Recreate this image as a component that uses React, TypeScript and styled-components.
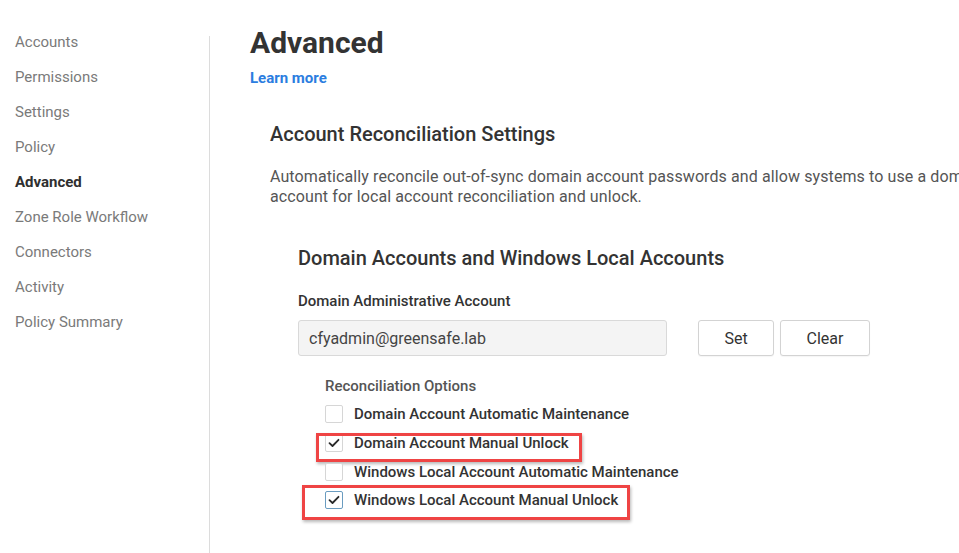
import React from "react";
import styled, { createGlobalStyle, css } from "styled-components";

const Global = createGlobalStyle`
  html, body { margin: 0; padding: 0; background: #fff; overflow: hidden; }
  body { font-family: Roboto, "Noto Sans", Arial, sans-serif; color: #333; }
  * { box-sizing: border-box; }
`;

const Page = styled.div`
  display: flex;
  width: 100vw;
  height: 553px;
  overflow: hidden;
`;

const Nav = styled.nav`
  width: 209px;
  flex-shrink: 0;
  padding: 25px 0 0 15px;
  display: flex;
  flex-direction: column;
`;

const NavItem = styled.div<{ $active?: boolean }>`
  height: 35px;
  line-height: 35px;
  font-size: 15px;
  color: ${(p) => (p.$active ? "#2f2f2f" : "#7a7a7a")};
  font-weight: ${(p) => (p.$active ? 700 : 400)};
  white-space: nowrap;
`;

const Divider = styled.div`
  width: 1px;
  flex-shrink: 0;
  margin-top: 36px;
  background: #dcdcdc;
`;

const Main = styled.main`
  flex: 1;
  min-width: 0;
  padding: 26px 0 0 40px;
`;

const Title = styled.h1`
  margin: 0;
  font-size: 30px;
  line-height: 34px;
  font-weight: 700;
  color: #333;
`;

const LearnMore = styled.a`
  display: block;
  margin-top: 8px;
  font-size: 15px;
  line-height: 20px;
  font-weight: 700;
  color: #2b7de0;
  text-decoration: none;
`;

const Section = styled.section`
  margin-top: 34px;
  padding-left: 20px;
`;

const SectionTitle = styled.h2`
  margin: 0;
  font-size: 20px;
  line-height: 24px;
  font-weight: 500;
  color: #333;
`;

const Description = styled.p`
  margin: 21px 0 0;
  width: 860px;
  font-size: 16px;
  letter-spacing: 0.1px;
  line-height: 20px;
  color: #555;
`;

const SubSection = styled.div`
  margin-top: 39px;
  padding-left: 28px;
`;

const SubTitle = styled.h3`
  margin: 0;
  font-size: 20px;
  line-height: 24px;
  font-weight: 500;
  color: #333;
`;

const FieldLabel = styled.div`
  margin-top: 22px;
  font-size: 15px;
  line-height: 18px;
  font-weight: 500;
  color: #333;
`;

const FieldRow = styled.div`
  display: flex;
  margin-top: 10px;
  height: 36px;
`;

const Input = styled.div`
  width: 369px;
  height: 36px;
  padding: 0 10px;
  display: flex;
  align-items: center;
  font-size: 16px;
  color: #444;
  background: #f4f4f4;
  border: 1px solid #d9d9d9;
  border-radius: 3px;
`;

const Button = styled.button<{ $w: number; $ml: number }>`
  width: ${(p) => p.$w}px;
  margin-left: ${(p) => p.$ml}px;
  height: 36px;
  font-family: inherit;
  font-size: 16px;
  color: #333;
  background: #fff;
  border: 1px solid #d3d3d3;
  border-radius: 3px;
  box-shadow: 0 1px 1px rgba(0, 0, 0, 0.04);
`;

const Options = styled.div`
  margin-top: 21px;
  padding-left: 27px;
`;

const OptionsLabel = styled.div`
  font-size: 15px;
  line-height: 18px;
  font-weight: 500;
  color: #555;
  margin-bottom: 5px;
`;

const Row = styled.div`
  position: relative;
  height: 28.7px;
  display: flex;
  align-items: center;
`;

const Box = styled.span<{ $focus?: boolean }>`
  width: 18px;
  height: 18px;
  flex-shrink: 0;
  border: 1px solid ${(p) => (p.$focus ? "#6a9cc0" : "#d6d6d6")};
  border-radius: 2px;
  background: #fff;
  display: flex;
  align-items: center;
  justify-content: center;
`;

const OptionText = styled.span`
  margin-left: 11px;
  font-size: 15px;
  font-weight: 500;
  color: #333;
  white-space: nowrap;
`;

const Highlight = styled.div<{ $l: number; $t: number; $w: number; $h: number }>`
  position: absolute;
  ${(p) => css`
    left: ${p.$l}px;
    top: ${p.$t}px;
    width: ${p.$w}px;
    height: ${p.$h}px;
  `}
  border: 3px solid #ef4444;
  box-shadow: 1px 2px 3px rgba(0, 0, 0, 0.28);
  pointer-events: none;
`;

const Check = () => (
  <svg width="12" height="10" viewBox="0 0 12 10">
    <path d="M1.5 5.2 L4.5 8 L10.5 1.8" fill="none" stroke="#2a2a2a" strokeWidth="1.8" strokeLinecap="round" strokeLinejoin="round" />
  </svg>
);

const navItems = [
  "Accounts",
  "Permissions",
  "Settings",
  "Policy",
  "Advanced",
  "Zone Role Workflow",
  "Connectors",
  "Activity",
  "Policy Summary",
];

type Opt = {
  label: string;
  checked?: boolean;
  focus?: boolean;
  hl?: { l: number; t: number; w: number; h: number };
};

const options: Opt[] = [
  { label: "Domain Account Automatic Maintenance" },
  { label: "Domain Account Manual Unlock", checked: true, hl: { l: -9, t: 4, w: 266, h: 29 } },
  { label: "Windows Local Account Automatic Maintenance" },
  { label: "Windows Local Account Manual Unlock", checked: true, focus: true, hl: { l: -23, t: -1, w: 328, h: 35 } },
];

export default function App() {
  return (
    <>
      <Global />
      <Page>
        <Nav>
          {navItems.map((n) => (
            <NavItem key={n} $active={n === "Advanced"}>
              {n}
            </NavItem>
          ))}
        </Nav>
        <Divider />
        <Main>
          <Title>Advanced</Title>
          <LearnMore href="#">Learn more</LearnMore>
          <Section>
            <SectionTitle>Account Reconciliation Settings</SectionTitle>
            <Description>
              Automatically reconcile out-of-sync domain account passwords and allow systems to use a domain administrative
              account for local account reconciliation and unlock.
            </Description>
            <SubSection>
              <SubTitle>Domain Accounts and Windows Local Accounts</SubTitle>
              <FieldLabel>Domain Administrative Account</FieldLabel>
              <FieldRow>
                <Input>cfyadmin@greensafe.lab</Input>
                <Button $w={76} $ml={31}>Set</Button>
                <Button $w={90} $ml={6}>Clear</Button>
              </FieldRow>
              <Options>
                <OptionsLabel>Reconciliation Options</OptionsLabel>
                {options.map((o) => (
                  <Row key={o.label}>
                    <Box $focus={o.focus}>{o.checked && <Check />}</Box>
                    <OptionText>{o.label}</OptionText>
                    {o.hl && <Highlight $l={o.hl.l} $t={o.hl.t} $w={o.hl.w} $h={o.hl.h} />}
                  </Row>
                ))}
              </Options>
            </SubSection>
          </Section>
        </Main>
      </Page>
    </>
  );
}
